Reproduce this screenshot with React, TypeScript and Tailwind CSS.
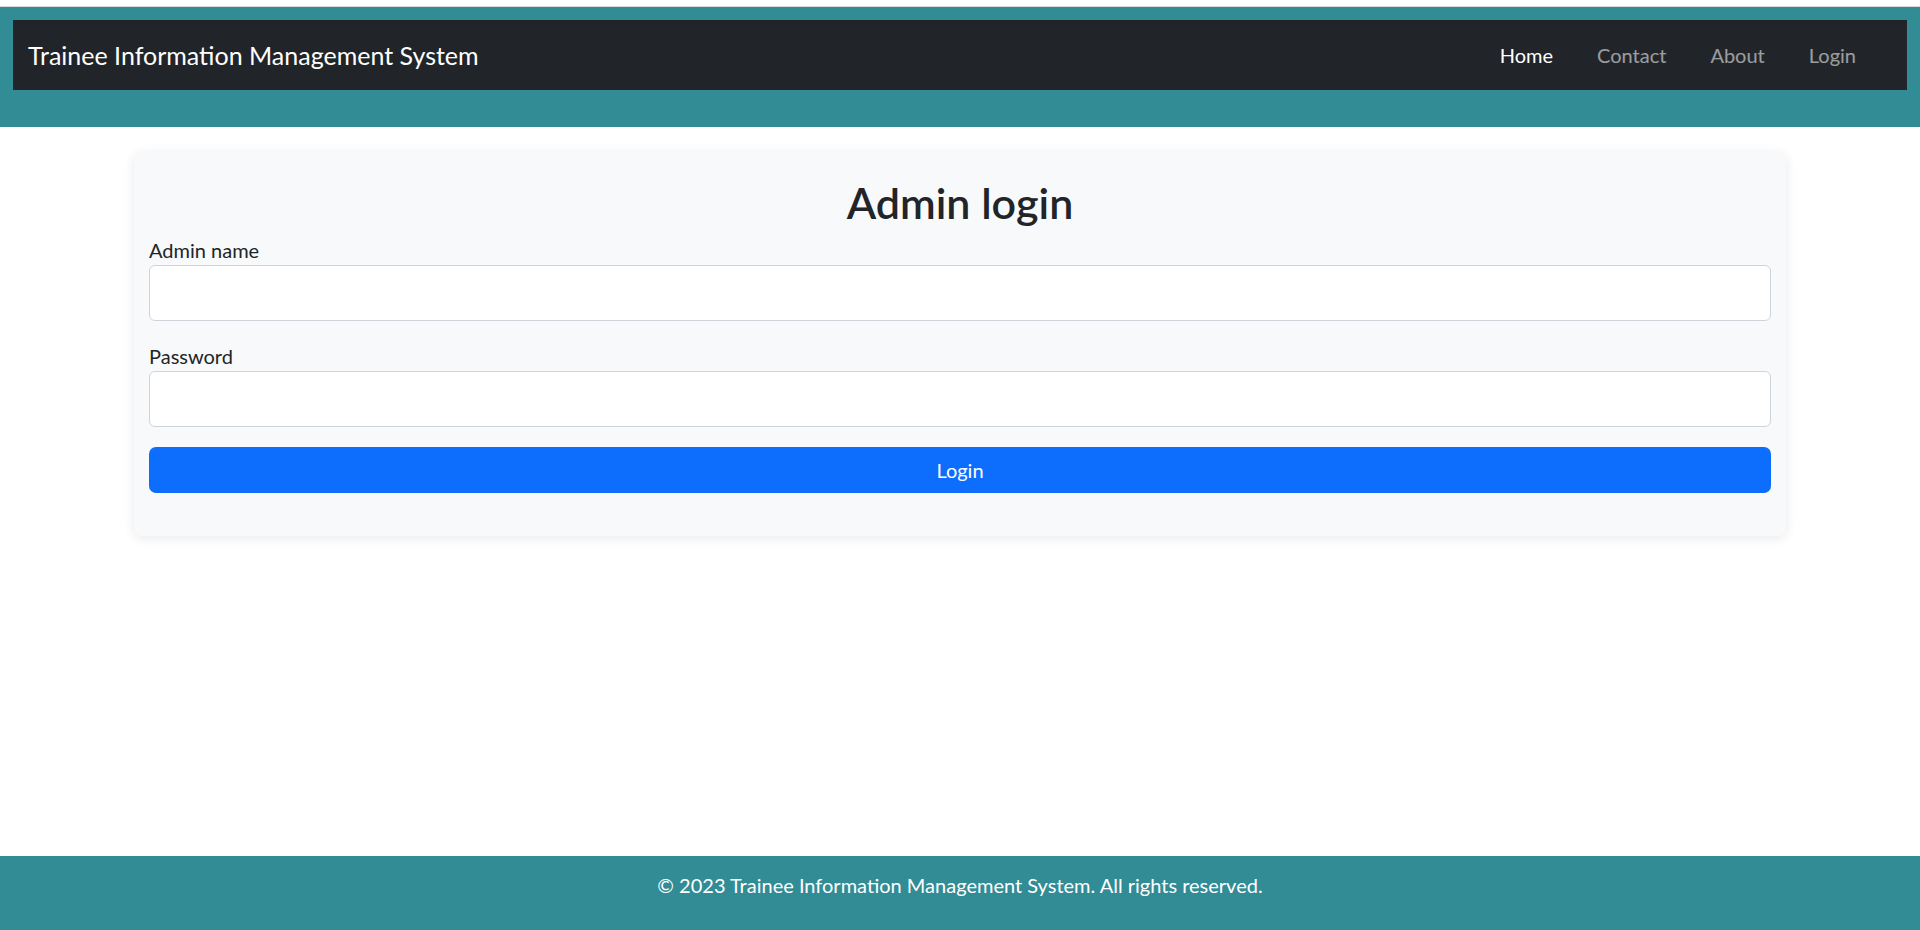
import React from "react";

const font = "font-['Lato','Liberation_Sans',sans-serif]";

const NavLink = ({ label, active }: { label: string; active?: boolean }) => {
  return (
    <a
      href="#"
      className={
        active
          ? "px-[22px] text-[20px] leading-[30px] text-white"
          : "px-[22px] text-[20px] leading-[30px] text-white/55 hover:text-white/75"
      }
    >
      {label}
    </a>
  );
};

const Field = ({ label, type }: { label: string; type: string }) => {
  return (
    <div className="mb-[20px] flex flex-col">
      <label className="text-[20px] leading-[30px] text-[#212529]">{label}</label>
      <input
        type={type}
        className="h-[56px] w-full rounded-[6px] border border-[#ced4da] bg-white px-[15px] text-[20px] outline-none focus:border-[#86b7fe]"
      />
    </div>
  );
};

export default function App() {
  return (
    <div className={`flex min-h-screen flex-col bg-white ${font}`}>
      <div className="h-[6px] bg-white" />
      <div className="h-px bg-[#dadada]" />
      <header className="bg-[#318c96] px-[13px] pt-[13px] pb-[37px]">
        <nav className="flex h-[70px] items-center justify-between bg-[#212529] pl-[15px] pr-[29px]">
          <a href="#" className="text-[25px] leading-[38px] text-white">
            Trainee Information Management System
          </a>
          <div className="flex items-center">
            <NavLink label="Home" active />
            <NavLink label="Contact" />
            <NavLink label="About" />
            <NavLink label="Login" />
          </div>
        </nav>
      </header>

      <main className="flex-1 pt-[25px]">
        <div className="mx-auto w-[1652px] rounded-[8px] bg-[#f8f9fa] px-[15px] pt-[27px] pb-[23px] shadow-[0_2px_12px_rgba(0,0,0,0.09)]">
          <h2 className="mb-[8px] text-center text-[43px] leading-[48px] font-semibold text-[#212529]">
            Admin login
          </h2>
          <Field label="Admin name" type="text" />
          <Field label="Password" type="password" />
          <button className="mb-[20px] h-[46px] w-full rounded-[7px] bg-[#0d6efd] text-[20px] text-white hover:bg-[#0b5ed7]">
            Login
          </button>
        </div>
      </main>

      <footer className="h-[74px] bg-[#318c96] pt-[14px] text-center text-[20px] leading-[30px] text-white">
        © 2023 Trainee Information Management System. All rights reserved.
      </footer>
    </div>
  );
}
